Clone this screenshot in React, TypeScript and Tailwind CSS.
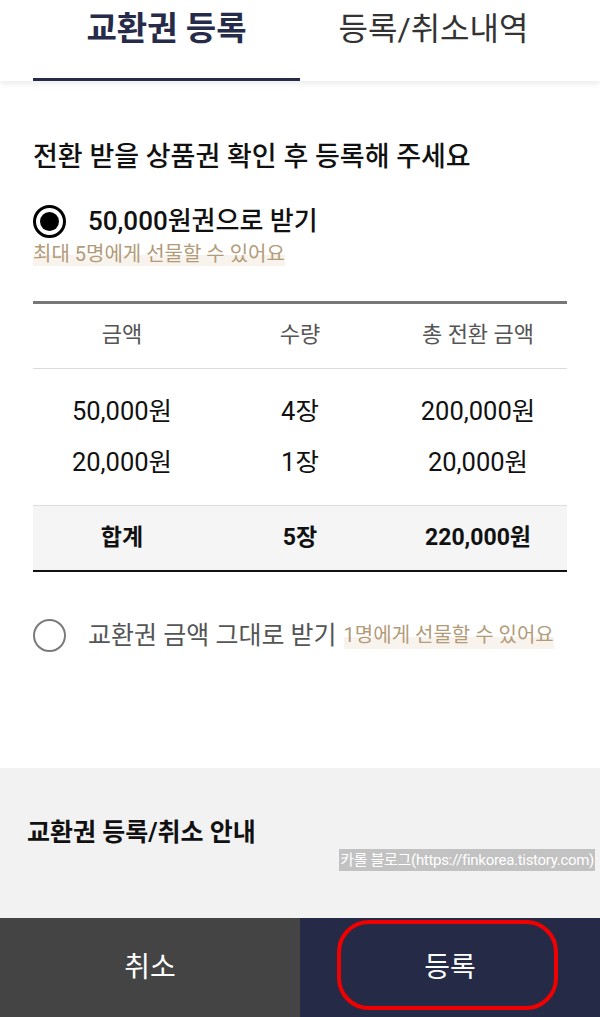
import { useState } from "react";

const font = { fontFamily: 'Roboto, "Noto Sans CJK KR", "Noto Sans", sans-serif' };

const rows = [
  { price: "50,000원", count: "4장", total: "200,000원" },
  { price: "20,000원", count: "1장", total: "20,000원" },
];

function Radio({ checked }: { checked: boolean }) {
  return (
    <span
      className={
        checked
          ? "w-[33px] h-[33px] rounded-full border-[3px] border-black flex items-center justify-center shrink-0"
          : "w-[33px] h-[33px] rounded-full border-2 border-[#7a7a7a] flex items-center justify-center shrink-0"
      }
    >
      {checked && <span className="w-[19px] h-[19px] rounded-full bg-black" />}
    </span>
  );
}

export default function App() {
  const [tab, setTab] = useState(0);
  const [option, setOption] = useState(0);

  return (
    <div className="w-[600px] h-[1017px] flex flex-col bg-white overflow-hidden" style={font}>
      {/* tabs */}
      <div className="h-[81px] flex pl-[33px] bg-white shadow-[0_3px_5px_rgba(0,0,0,0.07)] relative z-10 shrink-0">
        {["교환권 등록", "등록/취소내역"].map((t, i) => (
          <button
            key={t}
            onClick={() => setTab(i)}
            className={
              tab === i
                ? "w-[267px] h-full flex justify-center pt-[9px] border-b-[3px] border-[#262b4a] text-[33px] leading-[40px] font-bold text-[#262b4a]"
                : "w-[267px] h-full flex justify-center pt-[9px] border-b-[3px] border-transparent text-[32px] leading-[40px] text-[#333]"
            }
          >
            {t}
          </button>
        ))}
      </div>

      <div className="px-[33px] shrink-0">
        <h2 className="mt-[57px] text-[27px] leading-[38px] font-medium text-[#111]">
          전환 받을 상품권 확인 후 등록해 주세요
        </h2>

        <button
          onClick={() => setOption(0)}
          className="mt-[29px] flex items-center gap-[22px] h-[33px]"
        >
          <Radio checked={option === 0} />
          <span className="text-[26px] leading-[33px] font-medium text-[#111]">50,000원권으로 받기</span>
        </button>
        <div className="mt-[3px]">
          <span className="text-[20px] leading-[27px] text-[#b29b79] bg-[linear-gradient(transparent_55%,#f8f3ec_55%)]">
            최대 5명에게 선물할 수 있어요
          </span>
        </div>

        {/* table */}
        <div className="mt-[33px] border-t-[3px] border-[#777] border-b-2 border-b-[#111]">
          <div className="grid grid-cols-3 h-[65px] items-center pb-[4px] text-center text-[22px] text-[#555] border-b border-[#dcdcdc]">
            <span>금액</span>
            <span>수량</span>
            <span>총 전환 금액</span>
          </div>
          <div className="pt-[17px] pb-[17px] border-b border-[#dcdcdc]">
            {rows.map((r) => (
              <div key={r.price} className="grid grid-cols-3 h-[51px] items-center text-center text-[25.5px] text-[#111]">
                <span>{r.price}</span>
                <span>{r.count}</span>
                <span>{r.total}</span>
              </div>
            ))}
          </div>
          <div className="grid grid-cols-3 h-[64px] items-center text-center text-[23px] font-bold text-[#111] bg-[#f5f5f5]">
            <span>합계</span>
            <span>5장</span>
            <span>220,000원</span>
          </div>
        </div>

        <button
          onClick={() => setOption(1)}
          className="mt-[47px] flex items-center gap-[22px] h-[33px]"
        >
          <Radio checked={option === 1} />
          <span className="text-[25px] leading-[33px] text-[#555]">교환권 금액 그대로 받기</span>
          <span className="-ml-[15px] text-[20px] leading-[27px] text-[#b29b79] bg-[linear-gradient(transparent_55%,#f8f3ec_55%)]">
            1명에게 선물할 수 있어요
          </span>
        </button>
      </div>

      {/* info section */}
      <div className="mt-auto h-[150px] bg-[#f2f2f2] relative shrink-0">
        <h3 className="pl-[27px] pt-[48px] text-[25px] leading-[34px] font-bold text-[#111]">
          교환권 등록/취소 안내
        </h3>
        <span className="absolute right-[5px] top-[81px] h-[22px] px-[1px] bg-[#c2c2c2] text-white text-[15px] leading-[22px] tracking-[-0.3px]">
          카롤 블로그(https://finkorea.tistory.com)
        </span>
      </div>

      {/* bottom buttons */}
      <div className="h-[99px] flex shrink-0">
        <button className="w-[300px] h-full bg-[#444444] text-white text-[28px]">취소</button>
        <button className="w-[300px] h-full bg-[#252a47] text-white text-[28px] relative">
          등록
          <span className="absolute left-[37px] top-[2px] w-[221px] h-[90px] rounded-[32px] border-[4px] border-[#f00000]" />
        </button>
      </div>
    </div>
  );
}
